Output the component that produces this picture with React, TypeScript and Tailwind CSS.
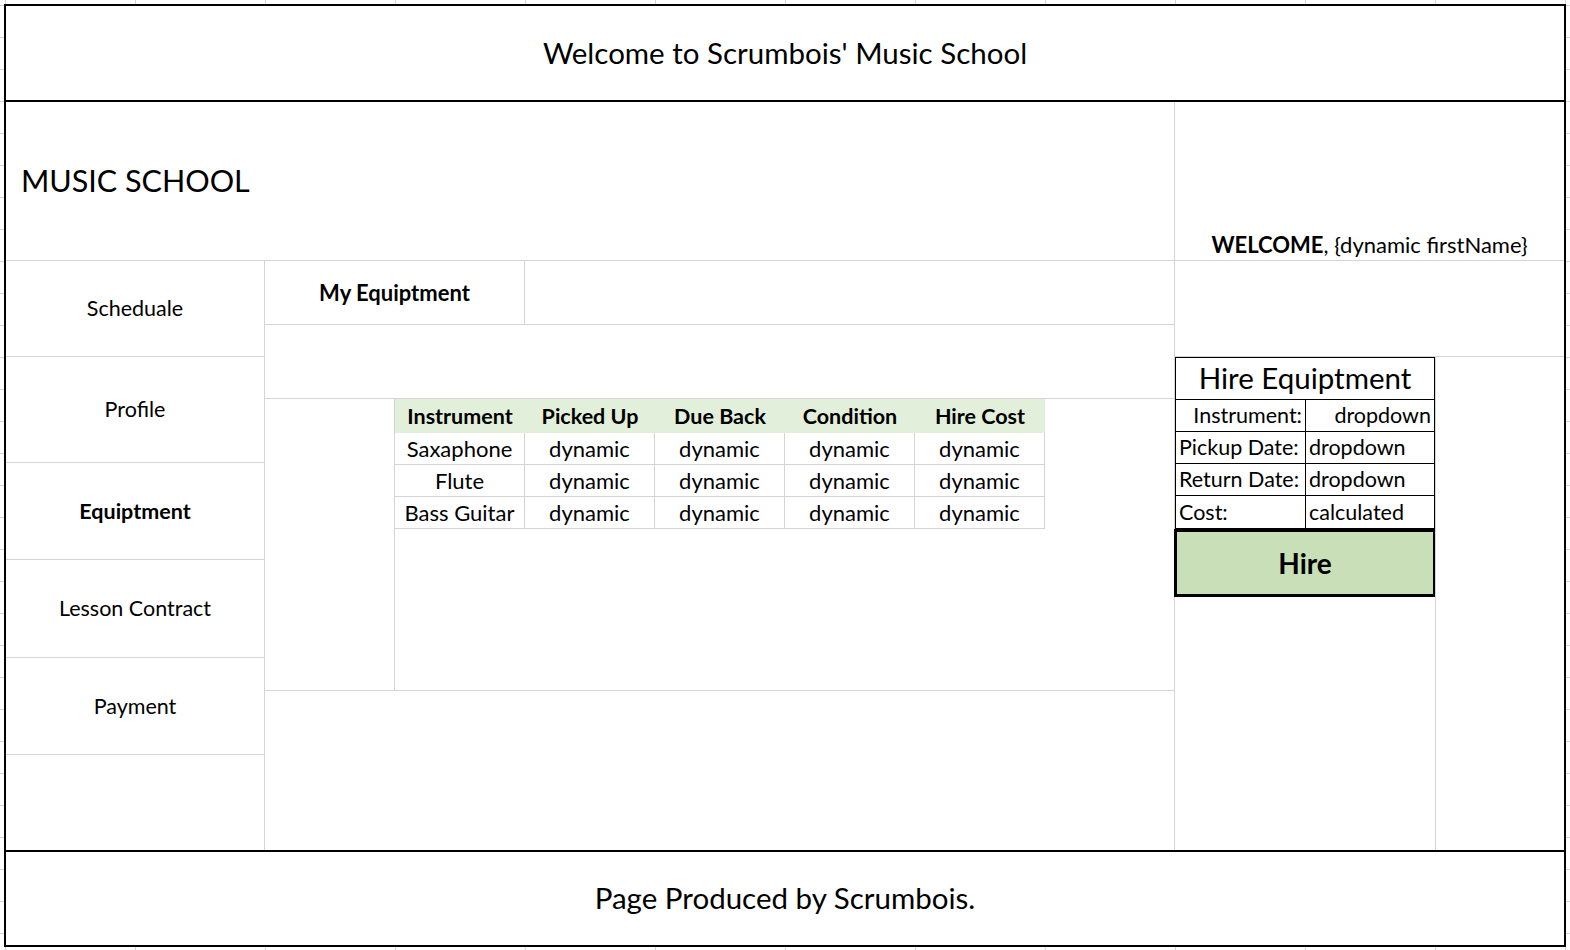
const font = "font-['Lato','Open_Sans',sans-serif]";

const navItems = [
  { label: 'Scheduale', h: 'h-[96px]' },
  { label: 'Profile', h: 'h-[106px]' },
  { label: 'Equiptment', h: 'h-[97px]', active: true },
  { label: 'Lesson Contract', h: 'h-[98px]' },
  { label: 'Payment', h: 'h-[97px]' },
];

const columns = ['Instrument', 'Picked Up', 'Due Back', 'Condition', 'Hire Cost'];

const rows = [
  ['Saxaphone', 'dynamic', 'dynamic', 'dynamic', 'dynamic'],
  ['Flute', 'dynamic', 'dynamic', 'dynamic', 'dynamic'],
  ['Bass Guitar', 'dynamic', 'dynamic', 'dynamic', 'dynamic'],
];

const hireFields = [
  { label: 'Instrument:', value: 'dropdown', right: true },
  { label: 'Pickup Date:', value: 'dropdown' },
  { label: 'Return Date:', value: 'dropdown' },
  { label: 'Cost:', value: 'calculated' },
];

function EquipmentTable() {
  return (
    <div className="w-[650px] shrink-0">
      <div className="flex h-[34px] bg-[#e2efda]">
        {columns.map((c) => (
          <div key={c} className="w-[130px] flex items-center justify-center text-[21.5px] font-bold text-black">
            {c}
          </div>
        ))}
      </div>
      {rows.map((r, i) => (
        <div key={i} className="flex h-[32px]">
          {r.map((cell, j) => (
            <div
              key={j}
              className="w-[130px] flex items-center justify-center border-r border-b border-[#d4d4d4] text-[22px] text-black"
            >
              {cell}
            </div>
          ))}
        </div>
      ))}
    </div>
  );
}

function HireBox() {
  return (
    <div className="w-[260px]">
      <div className="border border-black">
        <div className="h-[42px] flex items-center justify-center text-[29.5px] text-black border-b border-black">
          Hire Equiptment
        </div>
        {hireFields.map((f, i) => (
          <div key={f.label} className={`flex h-[32px] ${i < hireFields.length - 1 ? 'border-b border-black' : ''}`}>
            <div className={`w-[130px] flex items-center px-[3px] border-r border-black text-[21.5px] text-black whitespace-nowrap ${f.right ? 'justify-end' : ''}`}>
              {f.label}
            </div>
            <div className={`flex-1 flex items-center px-[3px] text-[21.5px] text-black whitespace-nowrap ${f.right ? 'justify-end' : ''}`}>
              {f.value}
            </div>
          </div>
        ))}
      </div>
      <button className="w-[262px] -ml-[1px] h-[68px] border-[3px] border-black bg-[#c9dfb7] text-[28px] font-bold text-black flex items-center justify-center">
        Hire
      </button>
    </div>
  );
}

export default function App() {
  return (
    <div
      className={`${font} w-[1570px] h-[950px] pt-[4px] px-[4px] pb-[3px] bg-white bg-[linear-gradient(to_right,#d4d4d4_1px,transparent_1px),linear-gradient(to_bottom,#d4d4d4_1px,transparent_1px)] bg-[size:130px_32px] bg-[position:5px_5px]`}
    >
      <div className="h-full flex flex-col border-2 border-black bg-white">
        <header className="h-[96px] shrink-0 flex items-center justify-center border-b-2 border-black text-[29.5px] text-black">
          Welcome to Scrumbois' Music School
        </header>

        <div className="flex-1 flex min-h-0">
          {/* left side: banner, nav and main */}
          <div className="w-[1168px] shrink-0 flex flex-col">
            <div className="h-[159px] shrink-0 flex items-center pl-[15px] border-b border-[#d4d4d4] text-[30.5px] text-black">
              MUSIC SCHOOL
            </div>
            <div className="flex-1 flex">
              <nav className="w-[259px] shrink-0 flex flex-col border-r border-[#d4d4d4]">
                {navItems.map((n) => (
                  <div
                    key={n.label}
                    className={`${n.h} shrink-0 flex items-center justify-center border-b border-[#d4d4d4] text-[21.5px] text-black ${n.active ? 'font-bold' : ''}`}
                  >
                    {n.label}
                  </div>
                ))}
                <div className="flex-1" />
              </nav>

              <main className="flex-1 flex flex-col">
                <div className="h-[64px] shrink-0 flex border-b border-[#d4d4d4]">
                  <div className="w-[260px] flex items-center justify-center border-r border-[#d4d4d4] text-[22px] font-bold text-black">
                    My Equiptment
                  </div>
                </div>
                <div className="h-[74px] shrink-0 border-b border-[#d4d4d4]" />
                <div className="h-[292px] shrink-0 flex border-b border-[#d4d4d4]">
                  <div className="w-[130px] shrink-0 border-r border-[#d4d4d4]" />
                  <div className="flex-1 flex flex-col">
                    <div className="flex">
                      <EquipmentTable />
                    </div>
                    <div className="flex-1" />
                  </div>
                </div>
                <div className="flex-1" />
              </main>
            </div>
          </div>

          {/* right side: welcome and hire form */}
          <aside className="flex-1 flex flex-col border-l border-[#d4d4d4]">
            <div className="h-[159px] shrink-0 flex items-end justify-center pb-[4px] border-b border-[#d4d4d4] text-[22px] leading-none text-black">
              <span>
                <b>WELCOME</b>, {'{dynamic firstName}'}
              </span>
            </div>
            <div className="h-[96px] shrink-0 border-b border-[#d4d4d4]" />
            <div className="flex-1 flex">
              <HireBox />
              <div className="flex-1 border-l border-[#d4d4d4]" />
            </div>
          </aside>
        </div>

        <footer className="h-[95px] shrink-0 flex items-center justify-center border-t-2 border-black text-[29.5px] text-black">
          Page Produced by Scrumbois.
        </footer>
      </div>
    </div>
  );
}
